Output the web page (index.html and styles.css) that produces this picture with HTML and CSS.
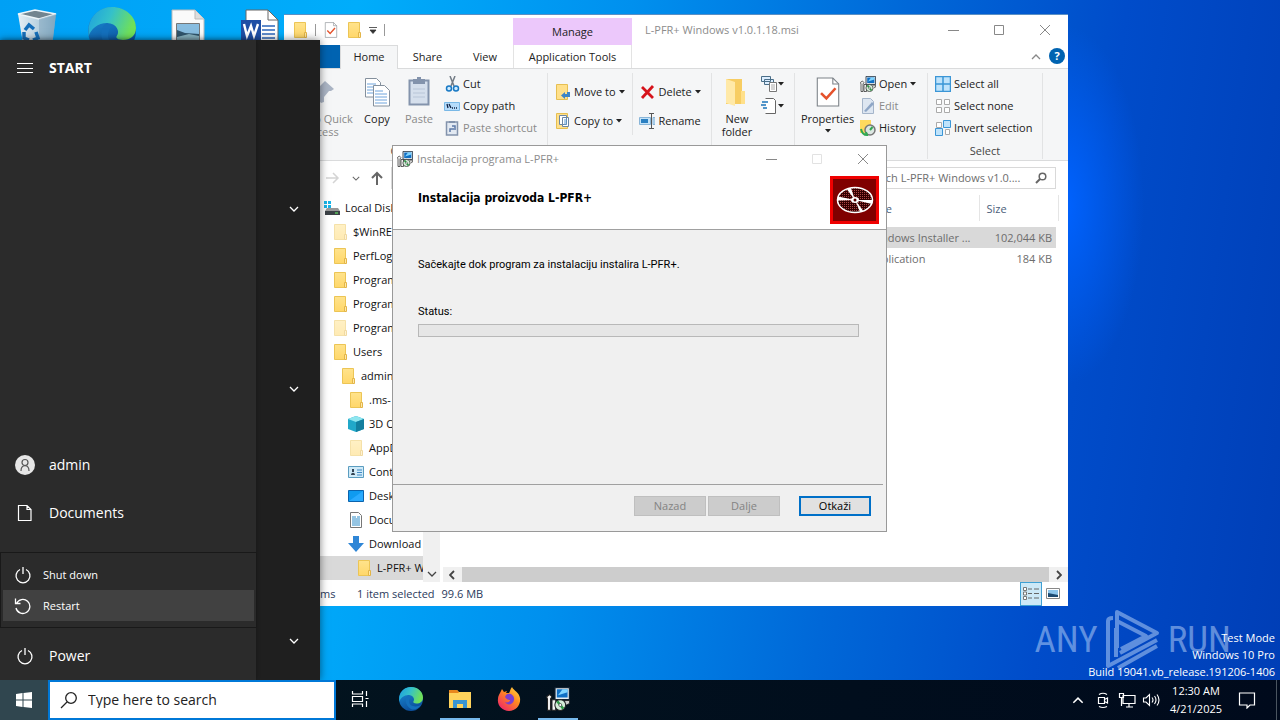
FILE: index.html
```html
<!DOCTYPE html>
<html lang="en">
<head>
<meta charset="utf-8">
<title>Desktop</title>
<link rel="stylesheet" href="styles.css">
</head>
<body>
<svg class="defs" aria-hidden="true">
  <defs>
    <linearGradient id="gEdge" x1="0" y1="0" x2="1" y2="0.3"><stop offset="0" stop-color="#1c9fe0"/><stop offset="0.5" stop-color="#35c1c9"/><stop offset="1" stop-color="#6fe05a"/></linearGradient>
    <linearGradient id="gEdge2" x1="0" y1="0" x2="0.4" y2="1"><stop offset="0" stop-color="#1b93dc"/><stop offset="1" stop-color="#0c4f9c"/></linearGradient>
    <linearGradient id="gFox" x1="1" y1="0" x2="0.2" y2="1"><stop offset="0" stop-color="#ffe14a"/><stop offset="0.45" stop-color="#ff8b1f"/><stop offset="1" stop-color="#f0246a"/></linearGradient>
    <linearGradient id="gBin" x1="0" y1="0" x2="1" y2="0"><stop offset="0" stop-color="#e6eff5"/><stop offset="0.6" stop-color="#b3cede"/><stop offset="1" stop-color="#7da7c2"/></linearGradient>
    <linearGradient id="gFold" x1="0" y1="0" x2="0" y2="1"><stop offset="0" stop-color="#ffe38c"/><stop offset="1" stop-color="#ffd76a"/></linearGradient>
    <pattern id="pDots" width="2" height="2" patternUnits="userSpaceOnUse"><rect width="2" height="2" fill="#300"/><rect width="1" height="1" fill="#a44"/></pattern>
  </defs>
  <symbol id="folder" viewBox="0 0 16 16"><path d="M2.500.500h11v15h-11z" fill="url(#gFold)" stroke="#ecc555"/><path d="M12.500 10.500h2v5h-2z" fill="#ffe9a6" stroke="#e3b548"/></symbol>
  <symbol id="msi" viewBox="0 0 16 16"><path d="M6 .4h9.600v8H6z" fill="#e8eef2" stroke="#123" stroke-width=".8"/><path d="M7.200 1.500h7.200v5.500H7.200z" fill="#0f6fc4"/><path d="M8 5.500l3-4h3.400v2z" fill="#7fd4ff"/><path d="M.4 6.500l2-1.500 1.500 1.500L3 8v7.500H1V8zM4 8.500h2.500v7H4z" fill="#f4f4f4" stroke="#222" stroke-width=".7"/><circle cx="9.500" cy="12" r="3.600" fill="#d5ecd9" stroke="#222" stroke-width=".7"/><path d="M9.500 12L7.500 9.500M9.500 12l2 2.500" stroke="#2c9a44" stroke-width="1.600"/><circle cx="9.500" cy="12" r="1" fill="#fff" stroke="#444" stroke-width=".5"/><path d="M12.500 9h3.200v2l-2 1" fill="#ccc" stroke="#222" stroke-width=".6"/></symbol>
  <symbol id="edge" viewBox="0 0 24 24"><circle cx="12" cy="12" r="12" fill="url(#gEdge2)"/><path d="M.3 10C1.500 4 6 0 12 0c7 0 12 5 12 10.500 0 4-3 6-6.500 6-2.500 0-4-1-3-2.200C16 12.500 14.500 8 9.500 8 5 8 1.300 11 .2 15z" fill="url(#gEdge)"/><path d="M9.500 8C5 10 6 19 12 22c3 1.500 8-.5 10-4-4 2.500-12 2-12-4 0-2 1-3.500 2.200-4.500z" fill="#1470bd"/></symbol>
  <symbol id="down" viewBox="0 0 10 6"><path d="M1 1l4 4 4-4" fill="none" stroke="currentColor" stroke-width="1.300"/></symbol>
  <symbol id="up" viewBox="0 0 10 6"><path d="M1 5l4-4 4 4" fill="none" stroke="currentColor" stroke-width="1.300"/></symbol>
  <symbol id="caret" viewBox="0 0 6 4"><path d="M0 0h6L3 3.500z" fill="currentColor"/></symbol>
  <symbol id="min" viewBox="0 0 12 12"><path d="M1 6.500h11" stroke="currentColor"/></symbol>
  <symbol id="max" viewBox="0 0 12 12"><path d="M1.500 1.500h9v9h-9z" fill="none" stroke="currentColor"/></symbol>
  <symbol id="close" viewBox="0 0 12 12"><path d="M1 1l10 10M11 1L1 11" stroke="currentColor"/></symbol>
  <symbol id="power" viewBox="0 0 18 18"><path d="M6 3.500a7 7 0 1 0 6 0M9 1v7" fill="none" stroke="currentColor" stroke-width="1.300"/></symbol>
  <symbol id="lens" viewBox="0 0 18 18"><circle cx="11" cy="7" r="5.300" fill="none" stroke="currentColor" stroke-width="1.300"/><path d="M7 11l-6 6" stroke="currentColor" stroke-width="1.300"/></symbol>
  <symbol id="checkdoc" viewBox="0 0 22 28"><path d="M1 1h14.500L21 6.500V27H1z" fill="#fff" stroke="#7c8288"/><path d="M15.500 1v5.500H21" fill="none" stroke="#7c8288"/><path d="M4.500 15l5 5L18 10.500" fill="none" stroke="#e5522c" stroke-width="2.400"/></symbol>
</svg>

<main class="desktop">
  <div class="shortcuts">
    <svg class="shortcut" viewBox="0 0 48 48" role="img" aria-label="Recycle Bin"><path d="M5 7l17-4 21 4-5 41H12z" fill="url(#gBin)"/><path d="M5 7l17-4 21 4-17 5z" fill="#728590" stroke="#eef6fa" stroke-width="1.500"/><path d="M26 12l17-5-5 41H26z" fill="#86a9c0" opacity=".6"/><g fill="none" stroke="#156fba" stroke-width="3.500"><path d="M12 23l4-5 5 4M23 25l2 6-5 2M16 33l-5-2 0-6"/></g></svg>
    <svg class="shortcut" role="img" aria-label="Microsoft Edge"><use href="#edge"/></svg>
    <svg class="shortcut" viewBox="0 0 48 48" role="img" aria-label="Picture"><path d="M9 3h23l9 9v36H9z" fill="#fafafa" stroke="#bbb"/><path d="M32 3v9h9" fill="#ddd" stroke="#bbb"/><path d="M13.500 16.500h23v18h-23z" fill="#88bde0" stroke="#777"/><path d="M14 23l8 3 14 1v7H14z" fill="#30546b"/><path d="M14 30l12-3 10 2v5H14z" fill="#87b1bf"/></svg>
    <svg class="shortcut" viewBox="0 0 48 48" role="img" aria-label="Word document"><path d="M8 3h22l10 10v35H8z" fill="#fff" stroke="#666"/><path d="M30 3v10h10z" fill="#fff" stroke="#666"/><path d="M24 19h13M24 23h13M24 27h13M24 31h13" stroke="#2b66bb" stroke-width="1.500"/><path d="M3 13h20v20H3z" fill="#1f4fa5"/><path d="M6 17l3 12 4-10 3 10 4-12" fill="none" stroke="#fff" stroke-width="2.400"/></svg>
  </div>

  <div class="watermark" aria-label="ANY RUN">
    <span>ANY</span>
    <svg viewBox="0 0 56 62" aria-hidden="true"><path d="M12 39V3l40 21-37 20M12 12l29 15-25 13M8 9Q3 9 3 12v45l49-26M11 19v29M13 59l39-22" fill="none" stroke="currentColor" stroke-width="4" stroke-linejoin="round"/></svg>
    <span>RUN</span>
  </div>
  <p class="build">Test Mode<br>Windows 10 Pro<br><span>Build 19041.vb_release.191206-1406</span></p>

  <section class="explorer" aria-label="File Explorer">
    <header class="caption">
      <div class="quick">
        <svg class="i16"><use href="#folder"/></svg><i></i>
        <svg class="i16"><use href="#checkdoc"/></svg>
        <svg class="i16"><use href="#folder"/></svg>
        <svg class="drop" viewBox="0 0 8 8"><path d="M0 1.500h8M1 4h6L4 7.500z" stroke="#333" stroke-width=".8" fill="#333"/></svg><i></i>
      </div>
      <div class="manage">Manage</div>
      <h1>L-PFR+ Windows v1.0.1.18.msi</h1>
      <div class="controls">
        <button aria-label="Minimize"><svg><use href="#min"/></svg></button>
        <button aria-label="Maximize"><svg><use href="#max"/></svg></button>
        <button aria-label="Close"><svg><use href="#close"/></svg></button>
      </div>
    </header>
    <nav class="tabs">
      <button class="file" aria-label="File"></button>
      <button class="tab active">Home</button>
      <button class="tab">Share</button>
      <button class="tab">View</button>
      <button class="tab tools">Application Tools</button>
      <svg class="chev"><use href="#up"/></svg>
      <button class="help" aria-label="Help">?</button>
    </nav>
    <div class="ribbon">
      <div class="group g-clip">
        <div class="tools-row">
          <button class="big pin off"><svg viewBox="0 0 32 32"><path d="M19 5l9 8-3 2-2 0-5 6 0 5-3 1-4-5-7 7-1-1 6-8-4-4 1-3 5 0 6-6z" fill="#aab4c4"/></svg>Pin to Quick access</button>
          <button class="big"><svg viewBox="0 0 32 32"><g fill="#fff" stroke="#84909d"><path d="M4.500 2.500h11l4 4V21h-15z"/><path d="M12.500 9.500h11l5 5V30h-16z"/></g><path d="M6 8h9M6 11h6M6 14h6M6 17h6M14 15h8M14 18h12M14 21h12M14 24h12M14 27h12" stroke="#6fa4dc"/></svg>Copy</button>
          <button class="big off"><svg viewBox="0 0 32 32"><path d="M6.500 4.500h19v24h-19z" fill="#d5dfec" stroke="#8393ac" stroke-width="2"/><path d="M10 3h12v5H10z" fill="#8393ac"/><path d="M14 1h4v3h-4z" fill="#8393ac"/><path d="M10 13h12M10 17h12M10 21h12" stroke="#b8c5d7"/></svg>Paste</button>
          <div class="stack">
            <button><svg class="i16" viewBox="0 0 16 16"><path d="M6 0l4 10M11 0L7 10" stroke="#727b85" stroke-width="1.500"/><circle cx="5" cy="12.500" r="2.500" fill="#cceaff" stroke="#1979c4" stroke-width="1.500"/><circle cx="12" cy="12.500" r="2.500" fill="#cceaff" stroke="#1979c4" stroke-width="1.500"/></svg>Cut</button>
            <button><svg class="i16" viewBox="0 0 16 16"><path d="M.5 4.500h15v8H.5z" fill="#b6dcfb" stroke="#79b8e6"/><path d="M3 6l1 4M5 6l2 4M8 10h1M10 10h1M12 10h1" stroke="#124" stroke-width="1.300"/></svg>Copy path</button>
            <button class="off"><svg class="i16" viewBox="0 0 16 16"><path d="M2.500 2h11v13h-11z" fill="#e2e9f2" stroke="#8393ac" stroke-width="1.500"/><path d="M5 1h6v2H5z" fill="#8393ac"/><path d="M6 12V9h4M8 6h3v4" fill="none" stroke="#5e7aa8" stroke-width="1.500"/></svg>Paste shortcut</button>
          </div>
        </div>
        <div class="label">Clipboard</div>
      </div>
      <div class="group g-org">
        <div class="tools-row">
          <div class="stack wide">
            <button><svg class="i16" viewBox="0 0 16 16"><path d="M1.500.500h11v15h-11z" fill="#ffe08a" stroke="#e6bf52"/><path d="M15 8v5h-5v2l-4-3.500L10 8v2h2V8z" fill="#3d85c6"/></svg>Move to<svg class="caret"><use href="#caret"/></svg></button>
            <button><svg class="i16" viewBox="0 0 16 16"><path d="M1.500.500h11v15h-11z" fill="#ffe08a" stroke="#e6bf52"/><path d="M4.500 2.500h7v9h-7zM7.500 4.500h6v9h-6z" fill="#fff" stroke="#6b86a4"/><path d="M9 7h3M9 9h3M9 11h3" stroke="#5b9bd5"/></svg>Copy to<svg class="caret"><use href="#caret"/></svg></button>
          </div>
          <div class="stack wide bar">
            <button><svg class="i16" viewBox="0 0 16 16"><path d="M3 3l11 11M14 2L3 14" stroke="#d6131b" stroke-width="2.800"/></svg>Delete<svg class="caret"><use href="#caret"/></svg></button>
            <button><svg class="i16" viewBox="0 0 16 16"><path d="M.5 4.500h11v7H.5zM14 4.500h2v7h-2z" fill="#c5e3f8" stroke="#89b5d8"/><path d="M2 6h7v4H2z" fill="#2b80c2"/><path d="M12.500 1v14M10 .5h5M10 15.500h5" stroke="#555"/></svg>Rename</button>
          </div>
        </div>
      </div>
      <div class="group g-new">
        <div class="tools-row">
          <button class="big"><svg viewBox="0 0 32 32"><path d="M5 3h16v25H5z" fill="#f7cd63"/><path d="M5 3l9 3v24l-9-3z" fill="#ffe9a8"/><path d="M20 15h4v13h-4z" fill="#ffe08a"/></svg>New folder</button>
          <div class="stack icons">
            <button aria-label="New item"><svg class="i16" viewBox="0 0 16 16"><path d="M.5.500h9v5h-9zM3.500 3.500h9v5h-9z" fill="#def" stroke="#4a6e88"/><path d="M8.500 6.500h7v9h-7z" fill="#fff" stroke="#777"/><path d="M10 9h4M10 11h4M10 13h4" stroke="#aaa"/></svg><svg class="caret"><use href="#caret"/></svg></button>
            <button aria-label="Easy access"><svg class="i16" viewBox="0 0 16 16"><path d="M4.500.500h8l2 2v13h-10" fill="#fff" stroke="#666"/><path d="M1 4h6M0 7h5M2 10h4" stroke="#1c75ba" stroke-width="1.500"/></svg><svg class="caret"><use href="#caret"/></svg></button>
          </div>
        </div>
      </div>
      <div class="group g-open">
        <div class="tools-row">
          <button class="big"><svg><use href="#checkdoc"/></svg>Properties<svg class="caret"><use href="#caret"/></svg></button>
          <div class="stack">
            <button><svg class="i16"><use href="#msi"/></svg>Open<svg class="caret"><use href="#caret"/></svg></button>
            <button class="off"><svg class="i16" viewBox="0 0 16 16"><path d="M2.500.500h8l3 3v12h-11z" fill="#dde6f1" stroke="#a5b5ca"/><path d="M4 13l8-9 2 2-8 8z" fill="#8ea6c6"/></svg>Edit</button>
            <button><svg class="i16" viewBox="0 0 16 16"><path d="M0 0h11v13H0z" fill="#ffd95e"/><circle cx="10" cy="10" r="5" fill="#dce6e2" stroke="#777" stroke-width="1.500"/><path d="M1 9c1 5 4 6 6 6l-1-3M10 10l2.500-3" fill="none" stroke="#32a852" stroke-width="2"/></svg>History</button>
          </div>
        </div>
      </div>
      <div class="group g-sel">
        <div class="tools-row">
          <div class="stack">
            <button><svg class="i16" viewBox="0 0 16 16"><path d="M.5.500h15v15H.5zM8 0v16M0 8h16" fill="#bfe3fb" stroke="#3b96d6" stroke-width="1.500"/></svg>Select all</button>
            <button><svg class="i16" viewBox="0 0 16 16"><path d="M1.500 1.500h5v5h-5zM9.500 1.500h5v5h-5zM1.500 9.500h5v5h-5zM9.500 9.500h5v5h-5z" fill="#fff" stroke="#aaa"/></svg>Select none</button>
            <button><svg class="i16" viewBox="0 0 16 16"><path d="M1.500 2.500h5v5h-5zM10.500 9.500h4v5h-4z" fill="#fff" stroke="#aaa"/><path d="M8.500.500h7v7h-7zM.5 8.500h7v7h-7z" fill="#bfe3fb" stroke="#3b96d6"/></svg>Invert selection</button>
          </div>
        </div>
        <div class="label">Select</div>
      </div>
    </div>
    <div class="address">
      <svg class="fwd" viewBox="0 0 14 12"><path d="M0 6h12M7 1l5 5-5 5" fill="none" stroke="#d4d4d4" stroke-width="1.500"/></svg>
      <svg class="recent"><use href="#down"/></svg>
      <svg class="upward" viewBox="0 0 14 14"><path d="M7 14V2M2 7l5-5 5 5" fill="none" stroke="#666" stroke-width="2"/></svg>
      <input class="path" aria-label="Address">
      <div class="find"><input aria-label="Search folder" value="Search L-PFR+ Windows v1.0...."><svg viewBox="0 0 12 12"><circle cx="7.500" cy="4.500" r="3.300" fill="none" stroke="#666" stroke-width="1.500"/><path d="M5 7l-4 4" stroke="#666" stroke-width="2"/></svg></div>
    </div>
    <div class="panes">
      <ul class="tree">
        <li><svg class="i16" viewBox="0 0 16 16"><path d="M0 1h3v3H0zM4 1h3v3H4zM0 5h3v3H0zM4 5h3v3H4z" fill="#17b4e8"/><path d="M3 8h11l2 3v1H1v-1z" fill="#999"/><path d="M1 11h15v4H1z" fill="#3c4247"/><path d="M11 13h3" stroke="#6f6"/></svg>Local Disk</li>
        <li class="d1 pale"><svg class="i16"><use href="#folder"/></svg>$WinRE</li>
        <li class="d1"><svg class="i16"><use href="#folder"/></svg>PerfLogs</li>
        <li class="d1"><svg class="i16"><use href="#folder"/></svg>Program</li>
        <li class="d1"><svg class="i16"><use href="#folder"/></svg>Program</li>
        <li class="d1 pale"><svg class="i16"><use href="#folder"/></svg>Program</li>
        <li class="d1"><svg class="i16"><use href="#folder"/></svg>Users</li>
        <li class="d2"><svg class="i16"><use href="#folder"/></svg>admin</li>
        <li class="d3"><svg class="i16"><use href="#folder"/></svg>.ms-</li>
        <li class="d3"><svg class="i16" viewBox="0 0 16 16"><path d="M0 3l8-3 8 3v10l-8 3-8-3z" fill="#21a8c9"/><path d="M0 3l8-3 8 3-8 3z" fill="#8fe6ef"/><path d="M8 6l8-3v10l-8 3z" fill="#137f9f"/></svg>3D Ob</li>
        <li class="d3 pale"><svg class="i16"><use href="#folder"/></svg>AppD</li>
        <li class="d3"><svg class="i16" viewBox="0 0 16 16"><path d="M.5 2.500h15v11H.5z" fill="#cfeaf8" stroke="#5b9dc0"/><path d="M3 11c0-3 4-3 4 0zM4 5h2v3H4z" fill="#345"/><path d="M9 6h5M9 8.500h5M9 11h5" stroke="#3f88c5"/></svg>Conta</li>
        <li class="d3"><svg class="i16" viewBox="0 0 16 16"><path d="M.5 2.500h15v11H.5z" fill="#0f9bf0" stroke="#0b63ad"/><path d="M1 13L15 3v10z" fill="#2aabff"/></svg>Deskt</li>
        <li class="d3"><svg class="i16" viewBox="0 0 16 16"><path d="M2.500.500h8l3 3v12h-11z" fill="#fff" stroke="#777"/><path d="M4 5h4M4 7h8M4 9h8M4 11h8M4 13h8M9 5h3" stroke="#2b8bc8"/></svg>Docum</li>
        <li class="d3"><svg class="i16" viewBox="0 0 16 16"><path d="M5 0h6v7h5l-8 9-8-9h5z" fill="#2f86d6"/></svg>Download</li>
        <li class="d4 current"><svg class="i16"><use href="#folder"/></svg>L-PFR+ Windows</li>
      </ul>
      <div class="vscroll"><svg><use href="#down"/></svg></div>
      <div class="files">
        <table>
          <thead><tr><th class="c-name"></th><th class="c-date"></th><th class="c-type">Type</th><th class="c-size">Size</th></tr></thead>
          <tbody>
            <tr class="chosen"><td></td><td></td><td>Windows Installer ...</td><td>102,044 KB</td></tr>
            <tr><td></td><td></td><td>Application</td><td>184 KB</td></tr>
          </tbody>
        </table>
        <div class="hscroll">
          <svg viewBox="0 0 6 10"><path d="M5 1L1 5l4 4" fill="none" stroke="#444" stroke-width="1.800"/></svg>
          <div class="thumb"></div>
          <svg viewBox="0 0 6 10"><path d="M1 1l4 4-4 4" fill="none" stroke="#444" stroke-width="1.800"/></svg>
        </div>
      </div>
    </div>
    <footer class="status">
      <span class="count">2 items</span><span class="sel">1 item selected</span><span class="size">99.6 MB</span>
      <button class="view on" aria-label="Details view"><svg viewBox="0 0 16 14"><path d="M.5.500h3v3h-3zM.5 5h3v3h-3zM.5 9.500h3v3h-3z" fill="#fff" stroke="#777"/><path d="M5 2h4M5 6.500h4M5 11h4M11 2h5M11 6.500h5M11 11h5" stroke="#666"/></svg></button>
      <button class="view" aria-label="Large icons"><svg viewBox="0 0 16 14"><path d="M1.500 1.500h13v10h-13z" fill="#fff" stroke="#888"/><path d="M3 3h10v7H3z" fill="#8cc5ec"/><path d="M3 6l5 1 5 1v2H3z" fill="#1c4a72"/></svg></button>
    </footer>
  </section>

  <section class="dialog" role="dialog" aria-label="Instalacija programa L-PFR+">
    <header class="dlg-caption">
      <svg class="i16"><use href="#msi"/></svg><span>Instalacija programa L-PFR+</span>
      <div class="controls">
        <button aria-label="Minimize"><svg><use href="#min"/></svg></button>
        <button class="faint" aria-label="Maximize" disabled><svg><use href="#max"/></svg></button>
        <button aria-label="Close"><svg><use href="#close"/></svg></button>
      </div>
    </header>
    <div class="banner">
      <h2>Instalacija proizvoda L-PFR+</h2>
      <svg viewBox="0 0 49 48" aria-hidden="true"><path d="M0 0h49v48H0z" fill="#f00000"/><path d="M3 3h43v42H3z" fill="#800000"/><ellipse cx="25" cy="24" rx="17.500" ry="12.500" fill="url(#pDots)" stroke="#fff" stroke-width="1.500"/><path d="M25 24L8 20.500v4zM25 24l-8-10.500 4-1.500zM25 24l17 0v4zM25 24l8 10.500-3 1.500z" fill="#fff"/><ellipse cx="25" cy="24" rx="4" ry="3" fill="#fff"/><circle cx="25" cy="24" r="1.500" fill="#500"/></svg>
    </div>
    <div class="dlg-body">
      <p>Sačekajte dok program za instalaciju instalira L-PFR+.</p>
      <label for="prog">Status:</label>
      <progress id="prog" value="0" max="100"></progress>
    </div>
    <footer class="dlg-foot">
      <button disabled>Nazad</button><button disabled>Dalje</button><button class="cancel">Otkaži</button>
    </footer>
  </section>

  <aside class="start">
    <div class="rail">
      <button class="entry title"><svg viewBox="0 0 18 18"><path d="M1 4.500h16M1 9.500h16M1 13.500h16" stroke="currentColor"/></svg>START</button>
      <div class="spacer"></div>
      <button class="entry"><svg class="avatar" viewBox="0 0 20 20"><circle cx="10" cy="10" r="10" fill="#e6e6e6"/><circle cx="10" cy="7.500" r="3" fill="none" stroke="#555" stroke-width="1.200"/><path d="M6 16c0-7 8-7 8 0" fill="none" stroke="#555" stroke-width="1.200"/></svg>admin</button>
      <button class="entry"><svg viewBox="0 0 18 18"><path d="M2.500 1.500h8.500l4 4v11H2.500zM11 1.500v4h4" fill="none" stroke="currentColor" stroke-width="1.200"/></svg>Documents</button>
      <div class="popup">
        <button><svg><use href="#power"/></svg>Shut down</button>
        <button class="hot"><svg viewBox="0 0 18 18"><path d="M2.500 6.500a7 7 0 1 1-.5 4.500M1.500 1.500v5h5" fill="none" stroke="currentColor" stroke-width="1.300"/></svg>Restart</button>
      </div>
      <button class="entry"><svg><use href="#power"/></svg>Power</button>
    </div>
    <div class="groups">
      <svg><use href="#down"/></svg><svg><use href="#down"/></svg><svg><use href="#down"/></svg>
    </div>
  </aside>
</main>

<footer class="taskbar">
  <button class="win" aria-label="Start"><svg viewBox="0 0 16 16"><path d="M0 2l6.500-1v6.500H0zM7.500.900L16 0v7.500H7.500zM0 8.500h6.500V15L0 14zM7.500 8.500H16V16l-8.500-1z" fill="#fff"/></svg></button>
  <label class="search"><svg><use href="#lens"/></svg><input value="Type here to search" aria-label="Search"></label>
  <button class="app" aria-label="Task View"><svg class="small" viewBox="0 0 18 18"><path d="M1.500 1v3h10V1M1.500 17v-3h10v3M1.500 6.500h10v5h-10zM15.500 1v5M15.500 11v6M14.500 8.500h3" fill="none" stroke="#fff" stroke-width="1.200"/></svg></button>
  <button class="app" aria-label="Microsoft Edge"><svg><use href="#edge"/></svg></button>
  <button class="app open" aria-label="File Explorer"><svg viewBox="0 0 24 24"><path d="M1 3h8l2 2h12v16H1z" fill="#ffd35c"/><path d="M1 3h8l2 3H1z" fill="#e8871e"/><path d="M5 13h14v8h-4v-4H9v4H5z" fill="#3a95d2"/></svg></button>
  <button class="app" aria-label="Firefox"><svg viewBox="0 0 24 24"><path d="M3 6l2-4 2 3 3-1-1 2h3c1-1 1-4 3-6 2 4 7 5 8 11 1 7-4 13-11 13S0 18 1 12c0-3 1-4 2-6z" fill="url(#gFox)"/><path d="M9 8c3-3 9 0 8 5s-7 6-9 2c2 1 5 0 5-2-2 0-4-1-5-3z" fill="#7a3fd0"/></svg></button>
  <button class="app open" aria-label="Installer"><svg><use href="#msi"/></svg></button>
  <div class="tray">
    <svg class="t-up"><use href="#up"/></svg>
    <svg viewBox="0 0 18 18"><path d="M4.500 6.500h6v6h-6zM10.500 8.500l3-1.500v5l-3-1.500M5 3.500q4-2.500 8 0M5 15.500q4 2 8 0" fill="none" stroke="#fff" stroke-width="1.200"/></svg>
    <svg viewBox="0 0 18 18"><path d="M5 4.500h12v8H5zM11 13v3M8 16h7M1.500 2.500h4v4h-4zM3.500 7v8" fill="none" stroke="#fff" stroke-width="1.200"/></svg>
    <svg viewBox="0 0 18 18"><path d="M1.500 7h2.500l3.500-3.500v11L4 11H1.500zM10 6.500q2 2.500 0 5M12.500 5q3 4 0 8M15 3.500q4 5.500 0 11" fill="none" stroke="#fff" stroke-width="1.100"/></svg>
    <time>12:30 AM<br>4/21/2025</time>
    <svg class="note" viewBox="0 0 18 18"><path d="M1.500 2h15v12H12l-3 3v-3H1.500z" fill="none" stroke="#fff" stroke-width="1.200"/></svg>
    <i></i>
  </div>
</footer>
</body>
</html>
```
FILE: styles.css
```css
* { box-sizing: border-box; }
body {
  margin: 0;
  height: 100vh;
  display: flex;
  flex-direction: column;
  overflow: hidden;
  font: 11px/16px "Open Sans", "Noto Sans", sans-serif;
  color: #222;
}
button, input { font: inherit; color: inherit; background: none; border: 0; padding: 0; margin: 0; }
button { display: flex; align-items: center; white-space: nowrap; }
h1, h2, p, ul { margin: 0; padding: 0; font-size: inherit; font-weight: 400; list-style: none; }
svg { flex: none; display: block; }
.defs { position: absolute; width: 0; height: 0; }
.i16 { width: 16px; height: 16px; }
.caret { width: 6px; height: 4px; }

.desktop {
  flex: 1;
  position: relative;
  min-height: 0;
  overflow: hidden;
  background:
    radial-gradient(ellipse 80px 180px at 1064px 205px, #0062ff 0%, transparent 100%),
    linear-gradient(98deg, #00a0f5 0%, #00adfb 26%, #0090ee 46%, #0068d8 66%, #004cca 82%, #003eb6 100%);
}
.shortcuts { display: flex; gap: 27px; padding: 7px 0 0 13px; }
.shortcut { width: 48px; height: 48px; }

.watermark {
  position: absolute;
  right: 49px;
  bottom: 9px;
  display: flex;
  align-items: center;
  gap: 7px;
  color: rgba(190, 215, 250, .5);
  font: 37px/62px "Roboto Condensed", Roboto, sans-serif;
}
.watermark svg { width: 56px; height: 62px; }
.build { position: absolute; right: 5px; bottom: 0; text-align: right; color: #fff; line-height: 17px; }

/* File Explorer */
.explorer {
  position: absolute;
  left: 284px;
  top: 14px;
  width: 784px;
  height: 592px;
  display: flex;
  flex-direction: column;
  background: #fff;
  border-top: 1px solid #5a8fc4;
}
.caption { display: flex; height: 30px; }
.quick { display: flex; align-items: center; gap: 7px; width: 229px; padding-left: 8px; }
.quick i { width: 1px; height: 12px; background: #999; }
.drop { width: 8px; height: 8px; }
.manage { width: 119px; margin-top: 3px; background: #ecc8fb; text-align: center; line-height: 28px; }
.caption h1 { flex: 1; padding-left: 13px; line-height: 30px; color: #8c8c8c; }
.controls { display: flex; margin-left: auto; color: #888; }
.controls button { width: 46px; justify-content: center; }
.controls svg { width: 12px; height: 12px; }
.controls .faint { color: #e2e2e2; }
.tabs { display: flex; height: 24px; align-items: stretch; border-bottom: 1px solid #dadbdc; }
.file { width: 56px; background: #0063b1; }
.tab { width: 59px; justify-content: center; }
.tab.active { width: 58px; background: #f5f6f7; border: 1px solid #dadbdc; border-bottom: 0; margin-bottom: -1px; padding-bottom: 2px; }
.tab.active + .tab + .tab { width: 56px; }
.tab.tools { width: 119px; border: solid #e3e3e3; border-width: 0 1px; }
.chev { width: 10px; height: 6px; margin: 9px 8px 0 auto; color: #888; }
.help { width: 16px; height: 16px; border-radius: 50%; background: #0063b1; color: #fff; font-weight: 700; justify-content: center; margin: 3px 3px 0 0; align-self: flex-start; }

.ribbon { display: flex; height: 92px; background: #f5f6f7; border-bottom: 1px solid #dadbdc; }
.group { display: flex; flex-direction: column; margin: 4px 0 1px; border-right: 1px solid #e2e3e4; }
.tools-row { display: flex; flex: 1; }
.label { text-align: center; line-height: 16px; color: #444; }
.g-clip { width: 264px; }
.g-org { width: 164px; padding-left: 7px; }
.g-new { width: 83px; padding-left: 4px; }
.g-open { width: 133px; }
.g-sel { width: 115px; }
.big { flex-direction: column; width: 42px; padding-top: 3px; line-height: 13px; white-space: normal; text-align: center; align-self: flex-start; }
.big > svg:first-child { width: 32px; height: 32px; margin-bottom: 4px; }
.big .caret { margin-top: 4px; }
.big.pin { width: 68px; margin-left: 4px; }
.g-open .big { width: 65px; }
.g-open .big > svg:first-child { height: 30px; margin: 1px 0 5px; }
.off { color: #8a8a8a; }
.stack { display: flex; flex-direction: column; padding-left: 3px; }
.stack button { height: 22px; gap: 3px; }
.g-clip .stack { padding-left: 4px; }
.g-open .stack { padding-left: 0; }
.g-sel .stack { padding-left: 7px; }
.stack.icons button { gap: 1px; }
.stack.wide { padding: 8px 0 0; width: 78px; gap: 7px; margin-bottom: 24px; }
.stack.bar { border-left: 1px solid #e2e3e4; padding-left: 6px; width: 79px; }

.address { display: flex; align-items: center; height: 34px; padding: 0 12px 0 42px; }
.fwd { width: 14px; height: 12px; margin-right: 12px; }
.recent { width: 8px; height: 5px; margin-right: 10px; color: #666; }
.upward { width: 14px; height: 14px; margin-right: 7px; }
.path { flex: 1; min-width: 0; height: 22px; border: 1px solid #d9d9d9; }
.find { display: flex; align-items: center; width: 200px; height: 22px; margin-left: 8px; padding: 0 8px 0 6px; border: 1px solid #d9d9d9; }
.find input { flex: 1; min-width: 0; color: #6d6d6d; }
.find svg { width: 12px; height: 12px; }

.panes { display: flex; flex: 1; min-height: 0; }
.tree { width: 139px; overflow: hidden; padding-top: 1px; }
.tree li { display: flex; align-items: center; gap: 5px; height: 24px; padding-left: 40px; white-space: nowrap; color: #111; }
.tree .d1 { padding-left: 48px; }
.tree .d2 { padding-left: 56px; }
.tree .d3 { padding-left: 64px; }
.tree .d4 { padding-left: 72px; }
.tree .current { background: #d9d9d9; }
.pale svg { opacity: .5; }
.vscroll { width: 17px; display: flex; align-items: flex-end; justify-content: center; background: #f0f0f0; padding-bottom: 5px; color: #444; }
.vscroll svg { width: 10px; height: 6px; stroke-width: 2; }
.files { flex: 1; display: flex; flex-direction: column; padding-left: 3px; }
table { border-collapse: collapse; table-layout: fixed; width: calc(100% - 12px); color: #6d6d6d; }
th { position: relative; height: 26px; padding: 2px 0 0 7px; text-align: left; font-weight: 400; color: #4c607a; border-right: 1px solid #e5e5e5; }
th:last-child { border: 0; }
th:last-child::after { content: ""; position: absolute; right: -3px; top: 0; width: 1px; height: 26px; background: #e5e5e5; }
thead::after { content: ""; display: block; height: 6px; }
.c-date { width: 140px; }
.c-type { width: 119px; }
.c-size { width: 77px; }
td { height: 21px; padding: 0 4px 0 8px; white-space: nowrap; }
td:last-child { text-align: right; padding-left: 0; }
.chosen { background: #d9d9d9; }
.hscroll { display: flex; align-items: center; gap: 7px; height: 15px; margin-top: auto; padding: 0 6px; background: #f0f0f0; }
.hscroll svg { width: 6px; height: 10px; }
.thumb { flex: 1; height: 15px; background: #cdcdcd; }
.status { display: flex; align-items: center; height: 24px; padding: 0 4px 0 14px; color: #2b3a5c; }
.count { width: 59px; }
.size { margin-left: 7px; }
.view { width: 22px; height: 24px; justify-content: center; border: 1px solid transparent; }
.view svg { width: 16px; height: 14px; }
.view.on { margin-left: auto; background: #cce8f7; border-color: #3fa0d4; }

/* Installer dialog */
.dialog {
  position: absolute;
  left: 392px;
  top: 145px;
  width: 495px;
  height: 387px;
  display: flex;
  flex-direction: column;
  background: #f0f0f0;
  border: 1px solid #999;
  color: #000;
}
.dlg-caption { display: flex; align-items: center; height: 25px; padding-left: 4px; gap: 4px; background: #fff; color: #8c8c8c; }
.banner { display: flex; justify-content: space-between; height: 59px; padding: 5px 7px 0 25px; background: #fff; border-bottom: 1px solid #a0a0a0; }
.banner h2 { font-family: "DejaVu Sans Condensed", sans-serif; font-size: 12px; font-weight: 700; line-height: 36px; padding-top: 4px; }
.banner svg { width: 49px; height: 48px; }
.dlg-body { flex: 1; display: flex; flex-direction: column; padding: 27px 27px 0 25px; }
.dlg-body p, .dlg-body label { font-family: Roboto, sans-serif; }
.dlg-body label { margin-top: 31px; }
progress { appearance: none; width: 100%; height: 13px; margin-top: 4px; border: 1px solid #b8b8b8; background: #e6e6e6; }
progress::-webkit-progress-bar { background: #e6e6e6; }
.dlg-foot { display: flex; justify-content: flex-end; gap: 2px; height: 47px; padding: 11px 12px 0 0; margin-right: 3px; border-top: 1px solid #a0a0a0; }
.dlg-foot button { width: 72px; height: 20px; justify-content: center; background: #ccc; border: 1px solid #bfbfbf; color: #838383; }
.dlg-foot .cancel { margin-left: 17px; background: #e1e1e1; border: 2px solid #0070c8; color: #000; }

/* Start menu */
.start { position: absolute; left: 0; top: 40px; bottom: 0; width: 320px; display: flex; background: #1f1f1f; box-shadow: 0 0 8px rgba(0, 0, 0, .5); color: #fff; font-size: 14px; }
.rail { display: flex; flex-direction: column; width: 256px; background: #2b2b2b; box-shadow: 0 0 4px rgba(0, 0, 0, .3); }
.entry { height: 48px; padding-left: 15px; gap: 14px; }
.entry svg { width: 20px; height: 18px; }
.entry .avatar { height: 20px; }
.title { height: 56px; font-weight: 700; }
.spacer { flex: 1; }
.popup { margin: 15px -1px 4px 0; padding: 6px 2px; background: #2b2b2b; border: 1px solid #191919; font-size: 11px; }
.popup button { width: 100%; height: 31px; padding-left: 11px; gap: 11px; }
.popup svg { width: 18px; height: 18px; }
.popup .hot { background: #414141; }
.groups { flex: 1; display: flex; flex-direction: column; align-items: center; padding: 166px 0 0 12px; }
.groups svg { width: 10px; height: 6px; }
.groups svg + svg { margin-top: 174px; }
.groups svg + svg + svg { margin-top: 246px; }

/* Taskbar */
.taskbar { display: flex; height: 40px; background: linear-gradient(90deg, #03161f, #000a1c); color: #fff; }
.win { width: 48px; justify-content: center; background: #30464f; }
.win svg { width: 16px; height: 16px; }
.search { display: flex; align-items: center; gap: 10px; width: 288px; padding-left: 10px; background: #fff; border: 2px solid #0078d7; color: #222; font-size: 14px; }
.search svg { width: 18px; height: 18px; }
.search input { flex: 1; min-width: 0; }
.app { width: 40px; margin-right: 9px; justify-content: center; border-bottom: 2px solid transparent; }
.search + .app { margin: 0 11px 0 4px; }
.app svg { width: 24px; height: 24px; }
.app .small { width: 18px; height: 18px; }
.app.open { border-color: #76b9ed; }
.tray { display: flex; align-items: center; gap: 6px; margin-left: auto; }
.tray svg { width: 18px; height: 18px; }
.tray .t-up { width: 12px; height: 7px; margin-right: 4px; }
.tray time { text-align: center; line-height: 18px; width: 60px; }
.tray .note { margin: 0 14px 0 6px; }
.tray i { width: 1px; height: 40px; background: #4a5560; margin-right: 3px; }
```
